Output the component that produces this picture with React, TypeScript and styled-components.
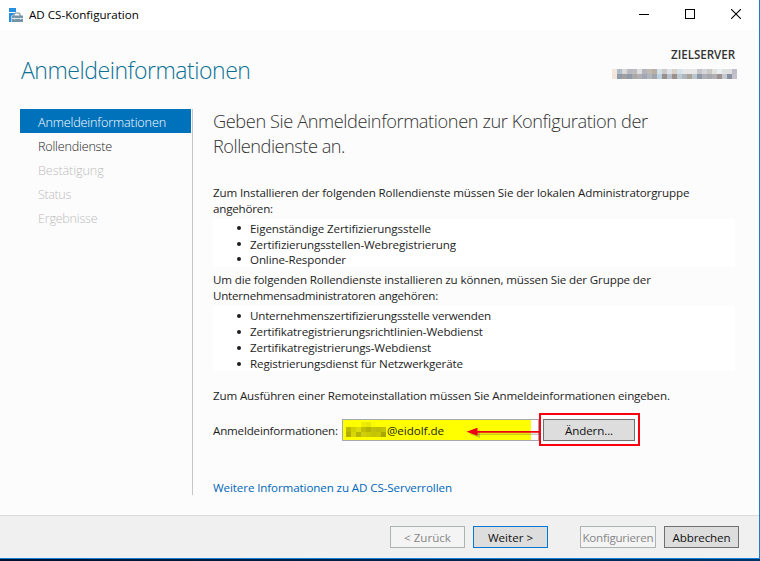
import React from 'react';
import styled, { createGlobalStyle } from 'styled-components';

const GlobalStyle = createGlobalStyle`
  * { box-sizing: border-box; }
  body {
    margin: 0;
    overflow: hidden;
    font-family: "Open Sans", "Noto Sans", sans-serif;
    font-size: 11.6px;
    color: #1e1e1e;
  }
`;

const Window = styled.div`
  width: 760px;
  height: 561px;
  display: flex;
  flex-direction: column;
  background: #fcfcfc;
  border-right: 1px solid #1a7fc9;
`;

const TitleBar = styled.header`
  height: 30px;
  flex: none;
  display: flex;
  align-items: center;
  padding-left: 9px;
  background: #fff;
  color: #000;
`;

const AppIcon = styled.svg`
  width: 14px;
  height: 15px;
  margin-right: 6px;
`;

const Caption = styled.span`
  flex: 1;
  line-height: 16px;
`;

const WindowControl = styled.span`
  width: 46px;
  height: 30px;
  display: flex;
  justify-content: center;
  padding-top: 9px;
`;

const Header = styled.div`
  height: 79px;
  flex: none;
  display: flex;
  justify-content: space-between;
  padding: 0 22px 0 21px;
`;

const PageTitle = styled.h1`
  margin: 24px 0 0;
  font-size: 23px;
  line-height: 32px;
  font-weight: 300;
  letter-spacing: -0.46px;
  color: #0b7195;
`;

const Target = styled.div`
  display: flex;
  flex-direction: column;
  align-items: flex-end;
  padding-top: 17px;
`;

const TargetLabel = styled.div`
  font-weight: 600;
  line-height: 16px;
  margin-right: 2px;
  letter-spacing: -0.04px;
  color: #333;
`;

const Redacted = styled.svg`
  flex: none;
  display: block;
`;

const TargetMosaic = styled.div`
  margin-top: 6px;
`;

const UserMosaic = styled.div`
  margin: -1px 1px 0 0;
`;

const Main = styled.div`
  height: 406px;
  flex: none;
  display: flex;
`;

const Nav = styled.nav`
  width: 193px;
  height: 386px;
  padding: 0 1px 0 20px;
  border-right: 1px solid #c6c6c6;
`;

const NavItem = styled.div<{ $state: 'active' | 'enabled' | 'disabled'; $track: number }>`
  height: 24px;
  padding: 1px 0 0 18px;
  font-size: 12.6px;
  line-height: 25px;
  font-weight: 340;
  letter-spacing: ${p => p.$track}px;
  color: ${p => ({ active: '#fff', enabled: '#1e1e1e', disabled: '#bdbdbd' })[p.$state]};
  background: ${p => (p.$state === 'active' ? '#0072bc' : 'transparent')};
`;

const Content = styled.main`
  width: 542px;
  padding-left: 20px;
`;

const Lead = styled.h2`
  margin: 0 0 26px;
  font-size: 18.2px;
  line-height: 25px;
  font-weight: 300;
  color: #333;
`;

const Line = styled.span<{ $track: number }>`
  display: block;
  white-space: nowrap;
  letter-spacing: ${p => p.$track}px;
`;

const Paragraph = styled.p`
  margin: 0;
  line-height: 16px;
`;

const RoleList = styled.ul<{ $pitch: number; $top: number; $height: number }>`
  list-style: none;
  margin: 2px 0 5px;
  padding: ${p => p.$top}px 0 0 24px;
  height: ${p => p.$height}px;
  line-height: ${p => p.$pitch}px;
  background: #fff;
`;

const Role = styled.li<{ $track: number }>`
  display: flex;
  align-items: center;
  gap: 9px;
  white-space: nowrap;
  letter-spacing: ${p => p.$track}px;
  &::before {
    content: '';
    width: 4px;
    height: 4px;
    margin-top: -1px;
    border-radius: 50%;
    background: #1e1e1e;
  }
`;

const RemoteNote = styled(Paragraph)`
  margin-top: 17px;
`;

const CredentialRow = styled.div`
  position: relative;
  display: flex;
  align-items: center;
  height: 22px;
  margin-top: 15px;
`;

const FieldLabel = styled.label`
  width: 129px;
  letter-spacing: -0.188px;
  line-height: 16px;
  padding-top: 1px;
`;

const Field = styled.div`
  width: 197px;
  height: 22px;
  margin-right: 4px;
  border: 1px solid #a7a9b0;
  background: #fff;
`;

const Highlight = styled.div`
  display: flex;
  align-items: center;
  width: 188px;
  height: 20px;
  padding-left: 3px;
  background: #ff0;
  letter-spacing: -0.04px;
`;

const Button = styled.button<{ $width: number; $track?: number; $kind?: 'default' | 'disabled' }>`
  width: ${p => p.$width}px;
  height: 22px;
  padding: 1px 0 0;
  font: inherit;
  line-height: 16px;
  white-space: nowrap;
  display: flex;
  align-items: center;
  justify-content: center;
  letter-spacing: ${p => p.$track ?? 0}px;
  color: ${p => (p.$kind === 'disabled' ? '#878787' : '#111')};
  background: ${p => (p.$kind === 'disabled' ? '#f4f4f4' : '#ddd')};
  border: 1px solid ${p => (p.$kind === 'disabled' ? '#adb2b5' : p.$kind === 'default' ? '#0078d7' : '#707070')};
`;

const RedFrame = styled.div`
  position: absolute;
  left: 326px;
  top: -6px;
  width: 101px;
  height: 33px;
  border: 2px solid #f80010;
`;

const Arrow = styled.svg`
  position: absolute;
  left: 252px;
  top: 5px;
`;

const MoreLink = styled.a`
  display: block;
  margin-top: 39px;
  line-height: 16px;
  letter-spacing: -0.107px;
  color: #0066b8;
`;

const Footer = styled.footer`
  height: 43px;
  flex: none;
  display: flex;
  justify-content: flex-end;
  gap: 8px;
  padding: 10px 20px 0 0;
  background: #f0f0f0;
  border-top: 1px solid #dadada;
`;

const ActionGroup = styled.div`
  display: flex;
  gap: 8px;
  margin-right: 24px;
`;

const BottomEdge = styled.div`
  height: 3px;
  flex: none;
  margin-right: -1px;
  border-top: 1px solid #1082dc;
  background: linear-gradient(90deg, #00102c, #003468);
`;

const serverRows = [
  ['#f5e6da', '#b0bcc9', '#d9d9db', '#b9b9be', '#bcbbc2', '#dededc', '#b1b4be', '#c0b9b2', '#b9aea6', '#d5e1e9', '#cbc9ca', '#dfe3e7', '#dbd0c6', '#d3e2ec', '#e5e6e8', '#e8e6e4', '#e5e7e8', '#c5c5ca', '#d4d5d8', '#cbc8c6', '#e0e1e2', '#eceeee', '#dfe0e2', '#dedfe1', '#bfbdc7'],
  ['#f2e4d8', '#8f9bab', '#a19f9f', '#8e9bab', '#aca8a8', '#b2afb3', '#a1a7b4', '#b2b5bb', '#a4a5aa', '#bbd1e2', '#97908d', '#b9bfca', '#9c908a', '#bbcad2', '#aeb5bb', '#a9a49b', '#b9c4cc', '#8f99a7', '#aeb0b6', '#a7a8af', '#b3afb1', '#9c9293', '#c5c8cf', '#8791a3', '#c6c2cc'],
];

const userRows = [
  ['#ffff00', '#fcfc00', '#ffff00', '#efee00', '#e8e70a', '#fafa00', '#ffff00', '#ffff00'],
  ['#bab900', '#d2d100', '#dddc08', '#c0bf00', '#b5b400', '#c2c10a', '#bdbc08', '#c4c300'],
  ['#b0af00', '#d8d700', '#b8b700', '#d0cf0a', '#cbca00', '#c5c400', '#c8c700', '#a9a800'],
];

function Mosaic({ rows, cell }: { rows: string[][]; cell: number }) {
  return (
    <Redacted width={rows[0].length * cell} height={rows.length * cell} shapeRendering="crispEdges">
      {rows.map((row, y) =>
        row.map((fill, x) => (
          <rect key={`${x}-${y}`} x={x * cell} y={y * cell} width={cell} height={cell} fill={fill} />
        )),
      )}
    </Redacted>
  );
}

export default function App() {
  return (
    <>
      <GlobalStyle />
      <Window>
        <TitleBar>
          <AppIcon viewBox="0 0 14 15">
            <path d="M0 0h7v4H0zM0 5h5v1.3L2.4 7.8V14H0z" fill="#2490df" />
            <path d="M5 8V6.2L6.3 5h3.5L11 6.2V8" fill="none" stroke="#7694a7" strokeWidth="1.2" />
            <path d="M3 7.5h11v2.7H3zM3 11h11v3H3z" fill="#7694a7" />
            <path d="M5 9.7h1.2v1.8H5zM11 9.7h1.2v1.8H11z" fill="#dfe7ec" />
          </AppIcon>
          <Caption>AD CS-Konfiguration</Caption>
          <WindowControl>
            <svg width="10" height="10"><path d="M0 5.5h10" stroke="#000" /></svg>
          </WindowControl>
          <WindowControl>
            <svg width="10" height="10"><path d="M.5.5h9v9h-9z" fill="none" stroke="#000" shapeRendering="crispEdges" /></svg>
          </WindowControl>
          <WindowControl>
            <svg width="10" height="10"><path d="M0 0l10 10M10 0L0 10" stroke="#000" strokeWidth="1.1" /></svg>
          </WindowControl>
        </TitleBar>

        <Header>
          <PageTitle>Anmeldeinformationen</PageTitle>
          <Target>
            <TargetLabel>ZIELSERVER</TargetLabel>
            <TargetMosaic><Mosaic rows={serverRows} cell={5} /></TargetMosaic>
          </Target>
        </Header>

        <Main>
          <Nav>
            <NavItem $state="active" $track={-0.135}>Anmeldeinformationen</NavItem>
            <NavItem $state="enabled" $track={-0.2}>Rollendienste</NavItem>
            <NavItem $state="disabled" $track={-0.09}>Bestätigung</NavItem>
            <NavItem $state="disabled" $track={-0.4}>Status</NavItem>
            <NavItem $state="disabled" $track={-0.24}>Ergebnisse</NavItem>
          </Nav>

          <Content>
            <Lead>
              <Line $track={-0.394}>Geben Sie Anmeldeinformationen zur Konfiguration der</Line>
              <Line $track={-0.48}>Rollendienste an.</Line>
            </Lead>
            <Paragraph>
              <Line $track={-0.125}>Zum Installieren der folgenden Rollendienste müssen Sie der lokalen Administratorgruppe</Line>
              <Line $track={-0.19}>angehören:</Line>
            </Paragraph>
            <RoleList $pitch={15.5} $top={2} $height={48}>
              <Role $track={-0.095}>Eigenständige Zertifizierungsstelle</Role>
              <Role $track={-0.12}>Zertifizierungsstellen-Webregistrierung</Role>
              <Role $track={-0.131}>Online-Responder</Role>
            </RoleList>
            <Paragraph>
              <Line $track={-0.139}>Um die folgenden Rollendienste installieren zu können, müssen Sie der Gruppe der</Line>
              <Line $track={-0.237}>Unternehmensadministratoren angehören:</Line>
            </Paragraph>
            <RoleList $pitch={16} $top={2} $height={65}>
              <Role $track={-0.205}>Unternehmenszertifizierungsstelle verwenden</Role>
              <Role $track={-0.133}>Zertifikatregistrierungsrichtlinien-Webdienst</Role>
              <Role $track={-0.115}>Zertifikatregistrierungs-Webdienst</Role>
              <Role $track={-0.141}>Registrierungsdienst für Netzwerkgeräte</Role>
            </RoleList>
            <RemoteNote>
              <Line $track={-0.148}>Zum Ausführen einer Remoteinstallation müssen Sie Anmeldeinformationen eingeben.</Line>
            </RemoteNote>
            <CredentialRow>
              <FieldLabel>Anmeldeinformationen:</FieldLabel>
              <Field>
                <Highlight>
                  <UserMosaic><Mosaic rows={userRows} cell={5} /></UserMosaic>
                  @eidolf.de
                </Highlight>
              </Field>
              <Button $width={92} $track={-0.11}>Ändern...</Button>
              <RedFrame />
              <Arrow width="76" height="18">
                <path d="M12 10.3h63" stroke="#555" strokeWidth="1.5" opacity=".3" />
                <path d="M4 10l11-4v8z" fill="#555" opacity=".3" />
                <path d="M12 7.8h63" stroke="#ee0012" strokeWidth="1.7" />
                <path d="M1.5 7.8l11-4v8z" fill="#ee0012" />
              </Arrow>
            </CredentialRow>
            <MoreLink>Weitere Informationen zu AD CS-Serverrollen</MoreLink>
          </Content>
        </Main>

        <Footer>
          <ActionGroup>
            <Button $width={75} $kind="disabled">&lt; Zurück</Button>
            <Button $width={75} $kind="default">Weiter &gt;</Button>
          </ActionGroup>
          <Button $width={76} $track={-0.227} $kind="disabled">Konfigurieren</Button>
          <Button $width={75} $track={-0.12}>Abbrechen</Button>
        </Footer>
        <BottomEdge />
      </Window>
    </>
  );
}
